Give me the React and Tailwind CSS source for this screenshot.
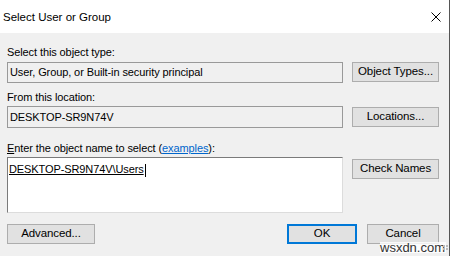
export default function App() {
  const btn =
    'h-[20px] w-[87px] bg-[#e1e1e1] border border-[#adadad] text-[11.5px] tracking-[-0.1px] text-black flex items-center justify-center';

  return (
    <div
      className="relative w-[454px] h-[256px] bg-white overflow-hidden text-black"
      style={{ fontFamily: '"Liberation Sans", Arial, sans-serif' }}
    >
      <div className="w-[450px] h-full flex flex-col border-r border-[#555]">
        {/* Title bar */}
        <div className="h-[33px] bg-white flex items-center justify-between pl-[3px] pr-[8px]">
          <span className="text-[11.5px] mt-[2px]">Select User or Group</span>
          <svg width="10" height="10" viewBox="0 0 10 10" className="mt-[1px]">
            <path d="M0.5 0.5 L9.5 9.5 M9.5 0.5 L0.5 9.5" stroke="#000" strokeWidth="1" />
          </svg>
        </div>

        {/* Body */}
        <div className="flex-1 bg-[#f0f0f0] pl-[7px] pr-[10px] flex flex-col text-[11px] tracking-[-0.1px]">
          <div className="mt-[12px] h-[14px] leading-[14px]">Select this object type:</div>
          <div className="mt-[3px] flex gap-[9px]">
            <div className="w-[336px] h-[21px] border border-[#999] bg-[#f0f0f0] pl-[2px] leading-[19px]">
              User, Group, or Built-in security principal
            </div>
            <button className={btn}>Object Types...</button>
          </div>

          <div className="mt-[7px] h-[14px] leading-[14px]">From this location:</div>
          <div className="mt-[2px] flex gap-[9px] items-start">
            <div className="w-[336px] h-[22px] border border-[#999] bg-[#f0f0f0] pl-[2px] leading-[20px]">
              DESKTOP-SR9N74V
            </div>
            <button className={`${btn} mt-[1px]`}>Locations...</button>
          </div>

          <div className="mt-[13px] h-[14px] leading-[14px]">
            <span className="underline">E</span>nter the object name to select (
            <span className="text-[#0066cc] underline">examples</span>):
          </div>
          <div className="mt-[2px] flex gap-[9px] items-start">
            <div className="w-[336px] h-[56px] bg-white border border-t-[#7a7a7a] border-l-[#7a7a7a] border-r-[#dcdcdc] border-b-[#dcdcdc] pl-[1px] pt-[3px]">
              <span className="underline leading-[14px]">DESKTOP-SR9N74V\Users</span>
              <span className="inline-block w-px h-[13px] bg-black align-middle ml-[1px]"></span>
            </div>
            <button className={`${btn} mt-[2px]`}>Check Names</button>
          </div>

          <div className="mt-[11px] flex items-start">
            <button className="h-[20px] w-[88px] bg-[#e1e1e1] border border-[#adadad] text-[11.5px] flex items-center justify-center">
              Advanced...
            </button>
            <div className="flex-1"></div>
            <button className="h-[20px] w-[70px] bg-[#e1e1e1] border-2 border-[#0078d7] text-[11.5px] flex items-center justify-center">
              OK
            </button>
            <button className="ml-[10px] h-[20px] w-[72px] bg-[#e1e1e1] border border-[#adadad] text-[11.5px] flex items-center justify-center">
              Cancel
            </button>
          </div>
        </div>
      </div>

      {/* watermark */}
      <div className="absolute left-[380px] top-[242px] h-[11px] flex items-center bg-white/80 pr-[1px]">
        <span className="text-[13px] leading-[11px] text-[#333]">wsxdn.com</span>
      </div>
      <div className="absolute left-[443px] top-[245px] grid grid-cols-2 gap-[1px]">
        <span className="w-[2px] h-[2px] bg-[#bbb]"></span>
        <span className="w-[2px] h-[2px] bg-[#bbb]"></span>
        <span className="w-[2px] h-[2px] bg-[#bbb]"></span>
        <span className="w-[2px] h-[2px] bg-[#bbb]"></span>
      </div>
    </div>
  );
}
